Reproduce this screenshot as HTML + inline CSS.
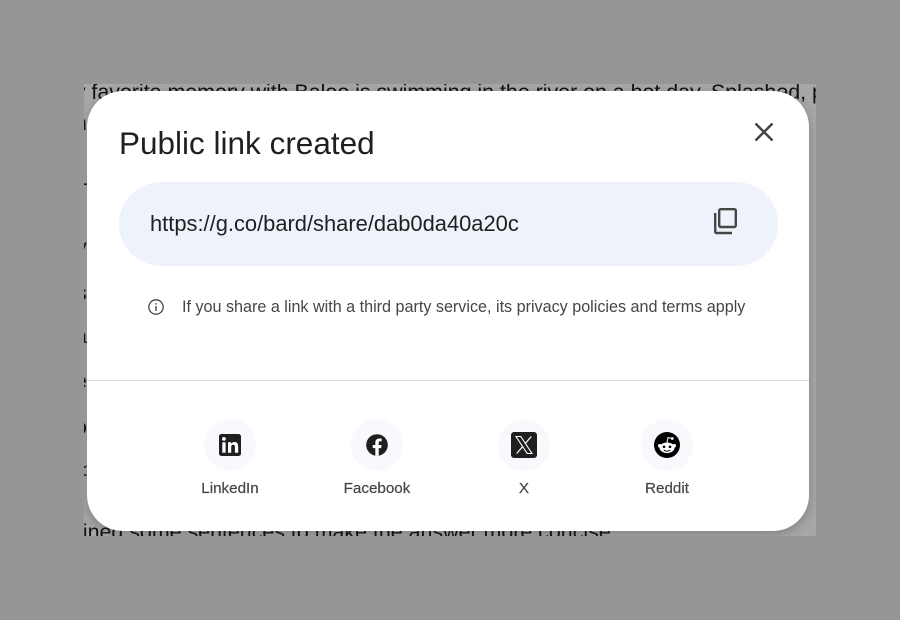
<!DOCTYPE html>
<html><head><meta charset="utf-8"><style>
html,body{margin:0;padding:0;width:900px;height:620px;overflow:hidden;background:#959796;font-family:"Liberation Sans",sans-serif}
.a{position:absolute;white-space:nowrap}
#panel{position:absolute;left:84px;top:84px;width:732px;height:452px;overflow:hidden;background:#a6a7a6;color:#111}
#panel div{position:absolute;white-space:nowrap;font-size:21.4px;line-height:24px}
#panel #sh{left:3px;top:7px;width:722px;height:440px;border-radius:36px;box-shadow:0 3px 10px rgba(40,40,40,.3)}
#modal{position:absolute;left:87px;top:91px;width:722px;height:440px;background:#fff;border-radius:36px}
.c{position:absolute;width:52px;height:52px;border-radius:50%;background:#f8f9fd;top:419px}
.l{position:absolute;top:480px;font-size:15.2px;line-height:18px;color:#444746;text-align:center;width:120px;font-weight:400;-webkit-text-stroke:.2px #444746}
</style></head><body>
<div id="panel">
<div style="left:-27px;top:-4px;word-spacing:-.05px">My favorite memory with Baloo is swimming in the river on a hot day. Splashed, p</div>
<div style="left:-15px;top:27px">m</div>
<div style="left:-8px;top:82px">1</div>
<div style="left:-8px;top:151px">v</div>
<div style="left:-8px;top:197px">s</div>
<div style="left:-9px;top:240px">a</div>
<div style="left:-9px;top:285px">e</div>
<div style="left:-9px;top:331px">o</div>
<div style="left:-9px;top:375px">&lt;</div>
<div style="left:-19px;top:436px">tained some sentences to make the answer more concise</div>
<div id="sh"></div>
</div>
<div id="modal"></div>
<div class="a" style="left:119px;top:124px;font-size:31.5px;line-height:38px;color:#1f1f1f">Public link created</div>
<svg class="a" style="left:752px;top:120px" width="24" height="24" viewBox="0 0 24 24"><path d="M3.500 3.500L20.500 20.500M20.500 3.500L3.500 20.500" stroke="#444746" stroke-width="2.500" fill="none"/></svg>
<div class="a" style="left:119px;top:182px;width:659px;height:84px;border-radius:42px;background:#eef3fb"></div>
<div class="a" style="left:150px;top:210px;font-size:21.9px;line-height:28px;color:#1f1f1f">https://g.co/bard/share/dab0da40a20c</div>
<svg class="a" style="left:711px;top:206px" width="28" height="30" viewBox="0 0 28 30" fill="none" stroke="#444746" stroke-width="2.400"><rect x="8.200" y="3.200" width="16.600" height="17.800" rx="1.500"/><path d="M4.200 7v18.600c0 .8.600 1.400 1.400 1.400h15.400"/></svg>
<svg class="a" style="left:148px;top:299px" width="16" height="16" viewBox="0 0 16 16"><circle cx="8" cy="8" r="7.200" fill="none" stroke="#444746" stroke-width="1.300"/><rect x="7.300" y="7" width="1.400" height="5" fill="#444746"/><rect x="7.300" y="4.200" width="1.400" height="1.500" fill="#444746"/></svg>
<div class="a" style="left:182px;top:297px;font-size:16.15px;line-height:20px;color:#444746">If you share a link with a third party service, its privacy policies and terms apply</div>
<div class="a" style="left:87px;top:380px;width:722px;height:1px;background:#dedede"></div>
<div class="c" style="left:204px"></div><div class="c" style="left:351px"></div><div class="c" style="left:498px"></div><div class="c" style="left:641px"></div>
<svg class="a" style="left:219px;top:434px" width="22" height="22" viewBox="0 0 22 22"><rect width="22" height="22" rx="2.500" fill="#1f1f1f"/><rect x="3.300" y="8.300" width="3.300" height="10.400" fill="#fff"/><circle cx="4.950" cy="4.900" r="1.900" fill="#fff"/><path d="M9 8.300h3.100v1.500c.6-1 1.800-1.800 3.400-1.800 2.900 0 3.700 1.900 3.700 4.600v6.100h-3.300v-5.400c0-1.400-.3-2.500-1.700-2.500-1.500 0-2 1-2 2.500v5.400H9z" fill="#fff"/></svg>
<svg class="a" style="left:366px;top:434px" width="22" height="22" viewBox="0 0 22 22"><circle cx="11" cy="11" r="10.800" fill="#1f1f1f"/><path d="M9.300 21.800v-7.700H6.700V11h2.600V8.700c0-2.700 1.600-4.200 4-4.200 1.200 0 2.400.2 2.400.2v2.600h-1.300c-1.300 0-1.700.8-1.700 1.600V11h2.900l-.5 3.100h-2.400v7.700z" fill="#fff"/></svg>
<svg class="a" style="left:511px;top:432px" width="26" height="26" viewBox="0 0 26 26"><rect width="26" height="26" rx="3" fill="#1f1f1f"/><path d="M5 4.500h4.800L21 21.500h-4.800z" fill="none" stroke="#fff" stroke-width="1.100"/><path d="M20.300 4.500L14 11.800M12 14.200L5.700 21.500" stroke="#fff" stroke-width="1.200" fill="none"/></svg>
<svg class="a" style="left:654px;top:432px" width="26" height="26" viewBox="0 0 26 26"><circle cx="13" cy="13" r="13" fill="#000"/><ellipse cx="13" cy="15.800" rx="7.500" ry="5.300" fill="#fff"/><circle cx="5.800" cy="13.800" r="1.800" fill="#fff"/><circle cx="20.200" cy="13.800" r="1.800" fill="#fff"/><circle cx="10" cy="14.800" r="1.300" fill="#000"/><circle cx="16" cy="14.800" r="1.300" fill="#000"/><path d="M9.800 18c2 1.500 4.400 1.500 6.400 0" stroke="#000" stroke-width="1" fill="none"/><path d="M13 10.500L14 5.500l3.500.8" stroke="#fff" stroke-width="1" fill="none"/><circle cx="18.300" cy="6.500" r="1.400" fill="#fff"/></svg>
<div class="l" style="left:170px">LinkedIn</div>
<div class="l" style="left:317px">Facebook</div>
<div class="l" style="left:464px">X</div>
<div class="l" style="left:607px">Reddit</div>
</body></html>
